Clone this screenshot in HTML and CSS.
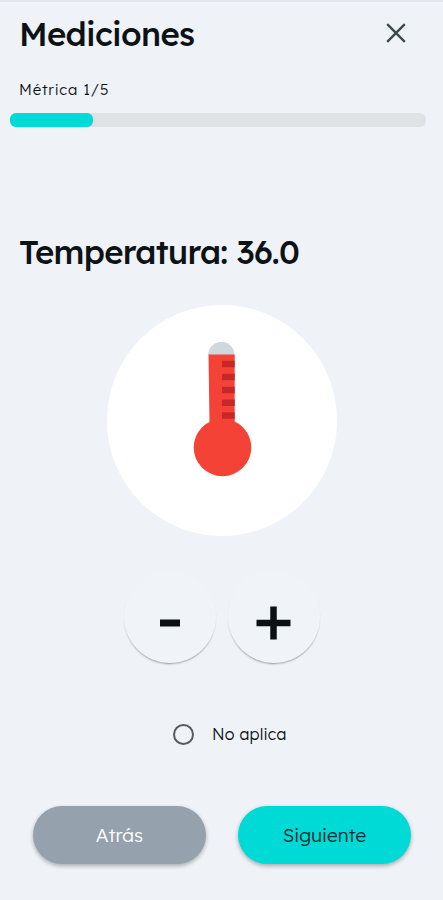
FILE: index.html
```html
<!DOCTYPE html>
<html lang="es">
<head>
    <meta charset="UTF-8">
    <title>Mediciones</title>
    <link rel="stylesheet" href="styles.css">
</head>
<body>
    <div class="pantalla">
        <header class="cabecera">
            <h1>Mediciones</h1>
            <svg class="cerrar" viewBox="0 0 20 20" width="20" height="20">
                <path d="M1.2 1.2L18.8 18.8M18.8 1.2L1.2 18.8" stroke="#3d4a4d" stroke-width="2.4" fill="none"/>
            </svg>
        </header>

        <p class="paso">Métrica 1/5</p>
        <div class="progreso">
            <div class="progreso-valor" style="width: 20%"></div>
        </div>

        <h2>Temperatura: 36.0</h2>

        <div class="circulo">
            <svg viewBox="0 0 60 136" width="60" height="136">
                <path d="M15.200 13a13.200 13.200 0 0 1 26.400 0z" fill="#cfd8dc"/>
                <path d="M15.500 12.500h26.200V81H16.500z" fill="#f44336"/>
                <circle cx="29.500" cy="105.500" r="28.800" fill="#f44336"/>
                <path d="M29 18.800h12.700v6.500H29zM29 31.800h12.700v6.500H29zM29 44.800h12.700v6.500H29zM29 57.500h12.700v6.500H29zM29 70.200h12.700v6.500H29z" fill="#c62828"/>
            </svg>
        </div>

        <div class="controles">
            <button class="redondo">
                <svg viewBox="0 0 36 36" width="36" height="36"><path d="M8 18h20" stroke="#0b1114" stroke-width="7"/></svg>
            </button>
            <button class="redondo">
                <svg viewBox="0 0 36 36" width="36" height="36"><path d="M.5 18h34M17.500 1.500v33" stroke="#0b1114" stroke-width="6.500"/></svg>
            </button>
        </div>

        <label class="no-aplica">
            <span class="radio"></span>
            <span>No aplica</span>
        </label>

        <div class="acciones">
            <button class="boton atras">Atrás</button>
            <button class="boton siguiente">Siguiente</button>
        </div>
    </div>
</body>
</html>
```

FILE: styles.css
```css
* {
    box-sizing: border-box;
}

body {
    margin: 0;
    background-color: #eff3f8;
    color: #0d1215;
    font-family: Lexend, Inter, sans-serif;
}

h1, h2, p {
    margin: 0;
}

button {
    border: none;
    padding: 0;
    font-family: inherit;
    cursor: pointer;
}

.pantalla {
    height: 900px;
    border-top: 2px solid #e3e6ec;
    overflow: hidden;
}

.cabecera {
    display: flex;
    justify-content: space-between;
    height: 62px;
    padding: 12px 37px 0 19px;
}

h1 {
    font-size: 33px;
    line-height: 40px;
    font-weight: 500;
    letter-spacing: -0.7px;
}

.cerrar {
    margin-top: 9px;
}

.paso {
    padding-left: 19px;
    margin-top: 16px;
    font-size: 15px;
    line-height: 20px;
    font-weight: 300;
    letter-spacing: 0.8px;
}

.progreso {
    width: 416px;
    height: 14px;
    margin: 13px 0 0 10px;
    border-radius: 6px;
    background-color: #dee2e5;
}

.progreso-valor {
    height: 100%;
    border-radius: 6px;
    background-color: #00dad7;
}

h2 {
    margin: 105px 0 0 19px;
    font-size: 33px;
    line-height: 40px;
    font-weight: 500;
    letter-spacing: -0.72px;
}

.circulo {
    display: flex;
    justify-content: center;
    width: 230px;
    height: 231px;
    margin: 33px 0 0 107px;
    padding: 37px 0 0 1px;
    border-radius: 50%;
    background-color: #fff;
}

.controles {
    display: flex;
    gap: 12px;
    margin: 35px 0 0 124px;
}

.redondo {
    display: flex;
    align-items: center;
    justify-content: center;
    width: 92px;
    height: 92px;
    padding-top: 11px;
    border-radius: 50%;
    background-color: #f0f4f9;
    box-shadow: 0 2px 2px -1px rgba(0, 0, 0, 0.38);
}

.no-aplica {
    display: flex;
    align-items: center;
    gap: 18px;
    height: 24px;
    margin: 59px 0 0 173px;
    font-size: 16px;
    font-weight: 300;
    letter-spacing: 0.2px;
}

.radio {
    width: 21px;
    height: 21px;
    border: 2px solid #555b60;
    border-radius: 50%;
}

.acciones {
    display: flex;
    gap: 32px;
    margin: 60px 0 0 33px;
}

.boton {
    width: 173px;
    height: 58px;
    border-radius: 29px;
    font-size: 19px;
    font-weight: 350;
    box-shadow: 0 2px 4px rgba(0, 0, 0, 0.3);
}

.atras {
    background-color: #95a1ac;
    color: #fff;
}

.siguiente {
    background-color: #00dad7;
    color: #0d2a30;
}
```
